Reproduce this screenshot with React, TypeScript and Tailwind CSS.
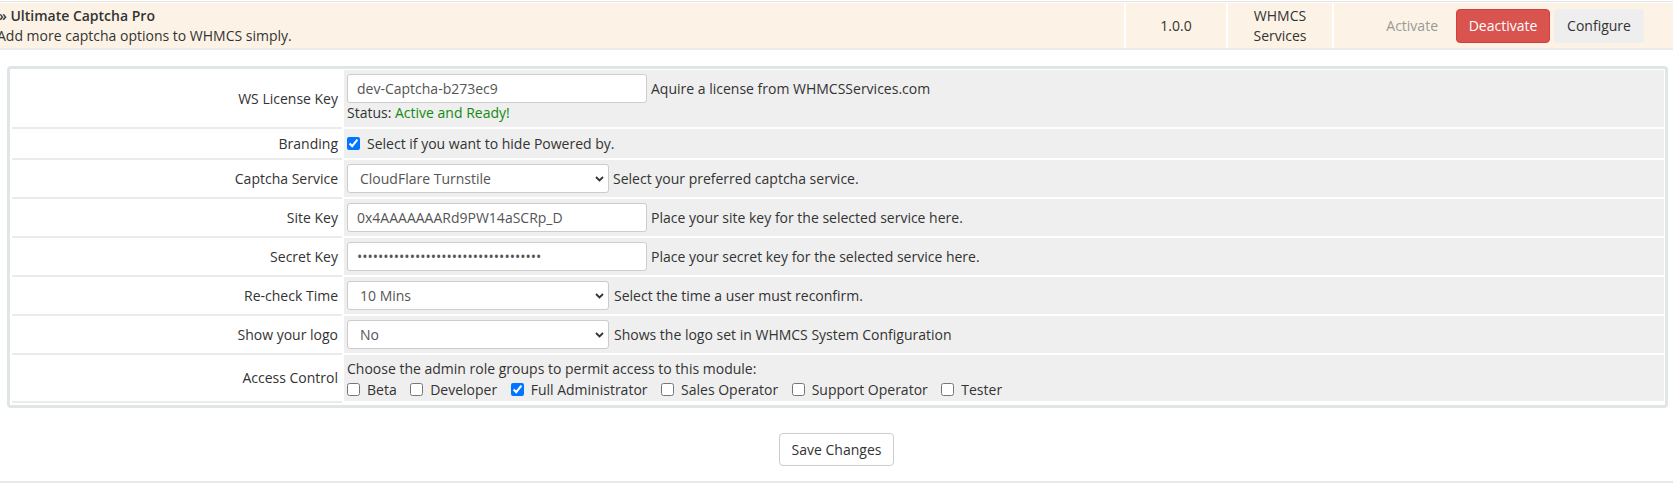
import React from "react";

const cream = "bg-[#fcf3e6]";

function Row({
  label,
  children,
  fieldClass = "py-[4px]",
}: {
  label: string;
  children: React.ReactNode;
  fieldClass?: string;
}) {
  return (
    <div className="flex">
      <div className="w-[330px] shrink-0 bg-white border-b-2 border-[#ebebeb] flex items-center justify-end pr-[4px] text-right">
        {label}
      </div>
      <div className={`ml-[2px] flex-1 bg-[#efefef] border-b-2 border-white px-[3px] ${fieldClass}`}>
        {children}
      </div>
    </div>
  );
}

function TextInput({ value, type = "text" }: { value: string; type?: string }) {
  return (
    <input
      type={type}
      readOnly
      value={value}
      className="h-[29px] w-[300px] shrink-0 rounded-[3px] border border-[#cccccc] bg-white pl-[9px] text-[14px] text-[#555555] outline-none"
    />
  );
}

function Select({ value }: { value: string }) {
  return (
    <div className="relative h-[29px] w-[262px] shrink-0">
      <select
        defaultValue={value}
        className="h-full w-full appearance-none rounded-[3px] border border-[#cccccc] bg-white pl-[12px] text-[14px] text-[#555555] outline-none"
      >
        <option>{value}</option>
      </select>
      <svg
        className="pointer-events-none absolute right-[5px] top-[12px]"
        width="9"
        height="6"
        viewBox="0 0 9 6"
        fill="none"
      >
        <path d="M1 1 L4.5 4.5 L8 1" stroke="#333" strokeWidth="1.8" />
      </svg>
    </div>
  );
}

function Check({ label, checked = false }: { label: string; checked?: boolean }) {
  return (
    <label className="mr-[13.5px] flex items-center">
      <input
        type="checkbox"
        defaultChecked={checked}
        className="m-0 mr-[7px] h-[13px] w-[13px] accent-[#0075ff]"
      />
      <span>{label}</span>
    </label>
  );
}

export default function App() {
  return (
    <div className="h-[483px] w-full overflow-hidden bg-white font-['Open_Sans','Liberation_Sans',sans-serif] text-[14px] leading-[20px] text-[#333333]">
      {/* Module row */}
      <div className="pt-[1px]">
        <div className="border-t border-[#e4e4e4] pt-[1px]">
          <div className="flex h-[47px] gap-[2px] border-b-2 border-[#ebebeb]">
            <div className={`${cream} flex w-[1124px] flex-col justify-center`}>
              <div className="-ml-[1px] font-semibold">» Ultimate Captcha Pro</div>
              <div className="-ml-[3px]">Add more captcha options to WHMCS simply.</div>
            </div>
            <div className={`${cream} flex w-[100px] items-center justify-center`}>1.0.0</div>
            <div className={`${cream} flex w-[104px] items-center justify-center text-center`}>
              WHMCS
              <br />
              Services
            </div>
            <div className={`${cream} flex flex-1 items-center justify-end pr-[29px]`}>
              <span className="mr-[18px] text-[#999999]">Activate</span>
              <button className="h-[34px] w-[94px] rounded-[4px] border border-[#d43f3a] bg-[#d9534f] text-white">
                Deactivate
              </button>
              <button className="ml-[4px] h-[34px] w-[90px] rounded-[4px] bg-[#eeeeee] text-[#333333]">
                Configure
              </button>
            </div>
          </div>
        </div>
      </div>

      {/* Settings form */}
      <div className="ml-[7px] mr-[5px] mt-[16px] rounded-[4px] border-[3px] border-[#e0e5e8] pb-[2px] pl-[2px] pr-[1px] pt-[1px]">
        <Row label="WS License Key">
          <div className="flex items-center">
            <TextInput value="dev-Captcha-b273ec9" />
            <span className="ml-[4px]">Aquire a license from WHMCSServices.com</span>
          </div>
          <div>
            Status: <span className="text-[#118a11]">Active and Ready!</span>
          </div>
        </Row>
        <Row label="Branding">
          <div className="flex h-[21px] items-center">
            <input type="checkbox" defaultChecked className="m-0 mr-[7px] h-[13px] w-[13px] accent-[#0075ff]" />
            <span>Select if you want to hide Powered by.</span>
          </div>
        </Row>
        <Row label="Captcha Service">
          <div className="flex items-center">
            <Select value="CloudFlare Turnstile" />
            <span className="ml-[4px]">Select your preferred captcha service.</span>
          </div>
        </Row>
        <Row label="Site Key">
          <div className="flex items-center">
            <TextInput value="0x4AAAAAAARd9PW14aSCRp_D" />
            <span className="ml-[4px]">Place your site key for the selected service here.</span>
          </div>
        </Row>
        <Row label="Secret Key">
          <div className="flex items-center">
            <TextInput type="password" value="xxxxxxxxxxxxxxxxxxxxxxxxxxxxxxxxxxx" />
            <span className="ml-[4px]">Place your secret key for the selected service here.</span>
          </div>
        </Row>
        <Row label="Re-check Time">
          <div className="flex items-center">
            <Select value="10 Mins" />
            <span className="ml-[5px]">Select the time a user must reconfirm.</span>
          </div>
        </Row>
        <Row label="Show your logo">
          <div className="flex items-center">
            <Select value="No" />
            <span className="ml-[5px]">Shows the logo set in WHMCS System Configuration</span>
          </div>
        </Row>
        <Row label="Access Control" fieldClass="pt-[4px] pb-[1px]">
          <div>Choose the admin role groups to permit access to this module:</div>
          <div className="flex h-[21px] items-center">
            <Check label="Beta" />
            <Check label="Developer" />
            <Check label="Full Administrator" checked />
            <Check label="Sales Operator" />
            <Check label="Support Operator" />
            <Check label="Tester" />
          </div>
        </Row>
      </div>

      <div className="mt-[25px] flex justify-center">
        <button className="h-[33px] rounded-[4px] border border-[#cccccc] bg-white px-[12px] text-[#333333]">
          Save Changes
        </button>
      </div>
      <div className="mt-[15px] border-t-2 border-[#e8e8e8]" />
    </div>
  );
}
